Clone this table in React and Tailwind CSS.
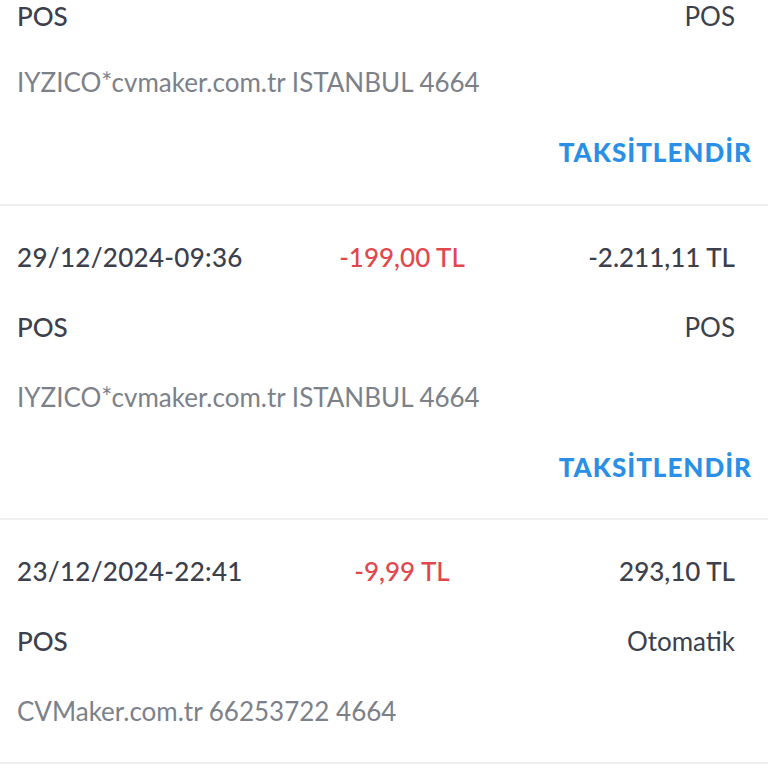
const TRANSACTIONS = [
  {
    date: "29/12/2024-09:36",
    amount: "-199,00 TL",
    balance: "-2.211,11 TL",
    type: "POS",
    channel: "POS",
    desc: "IYZICO*cvmaker.com.tr ISTANBUL 4664",
    installment: true,
  },
  {
    date: "23/12/2024-22:41",
    amount: "-9,99 TL",
    balance: "293,10 TL",
    type: "POS",
    channel: "Otomatik",
    desc: "CVMaker.com.tr 66253722 4664",
    installment: false,
  },
];

function InstallmentButton() {
  return (
    <div className="flex justify-end pr-[16px] h-[70px] items-center">
      <button className="font-black text-[26px] text-[#2a8fe6] tracking-[1px]">
        TAKSİTLENDİR
      </button>
    </div>
  );
}

function TransactionRow({ tx }) {
  return (
    <div className="border-b-2 border-[#efefef] pt-[16px] pb-[16px]">
      <div className="grid grid-cols-[310px_150px_1fr] pl-[17px] pr-[33px] h-[70px] items-center">
        <span className="font-medium text-[#3b404c] tracking-[0.3px]">{tx.date}</span>
        <span className="font-medium text-[#e2474d] text-center">{tx.amount}</span>
        <span className="font-medium text-[#3b404c] text-right">{tx.balance}</span>
      </div>
      <div className="flex justify-between pl-[17px] pr-[33px] h-[70px] items-center text-[#3b404c]">
        <span className="font-medium">{tx.type}</span>
        <span>{tx.channel}</span>
      </div>
      <div className="pl-[17px] pr-[33px] h-[70px] flex items-center text-[#7c8189]">
        {tx.desc}
      </div>
      {tx.installment && <InstallmentButton />}
    </div>
  );
}

export default function App() {
  return (
    <div
      className="w-[768px] h-[768px] overflow-hidden bg-white text-[26px]"
      style={{ fontFamily: "Lato, 'Noto Sans', sans-serif" }}
    >
      {/* previous transaction, scrolled past its first line */}
      <div className="border-b-2 border-[#efefef] pb-[17px]">
        <div className="flex justify-between items-start pl-[17px] pr-[33px] h-[47px] leading-[32px] text-[#3b404c]">
          <span className="font-medium">POS</span>
          <span>POS</span>
        </div>
        <div className="pl-[17px] pr-[33px] h-[70px] flex items-center text-[#7c8189]">
          IYZICO*cvmaker.com.tr ISTANBUL 4664
        </div>
        <InstallmentButton />
      </div>

      {TRANSACTIONS.map((tx) => (
        <TransactionRow key={tx.date} tx={tx} />
      ))}
    </div>
  );
}
